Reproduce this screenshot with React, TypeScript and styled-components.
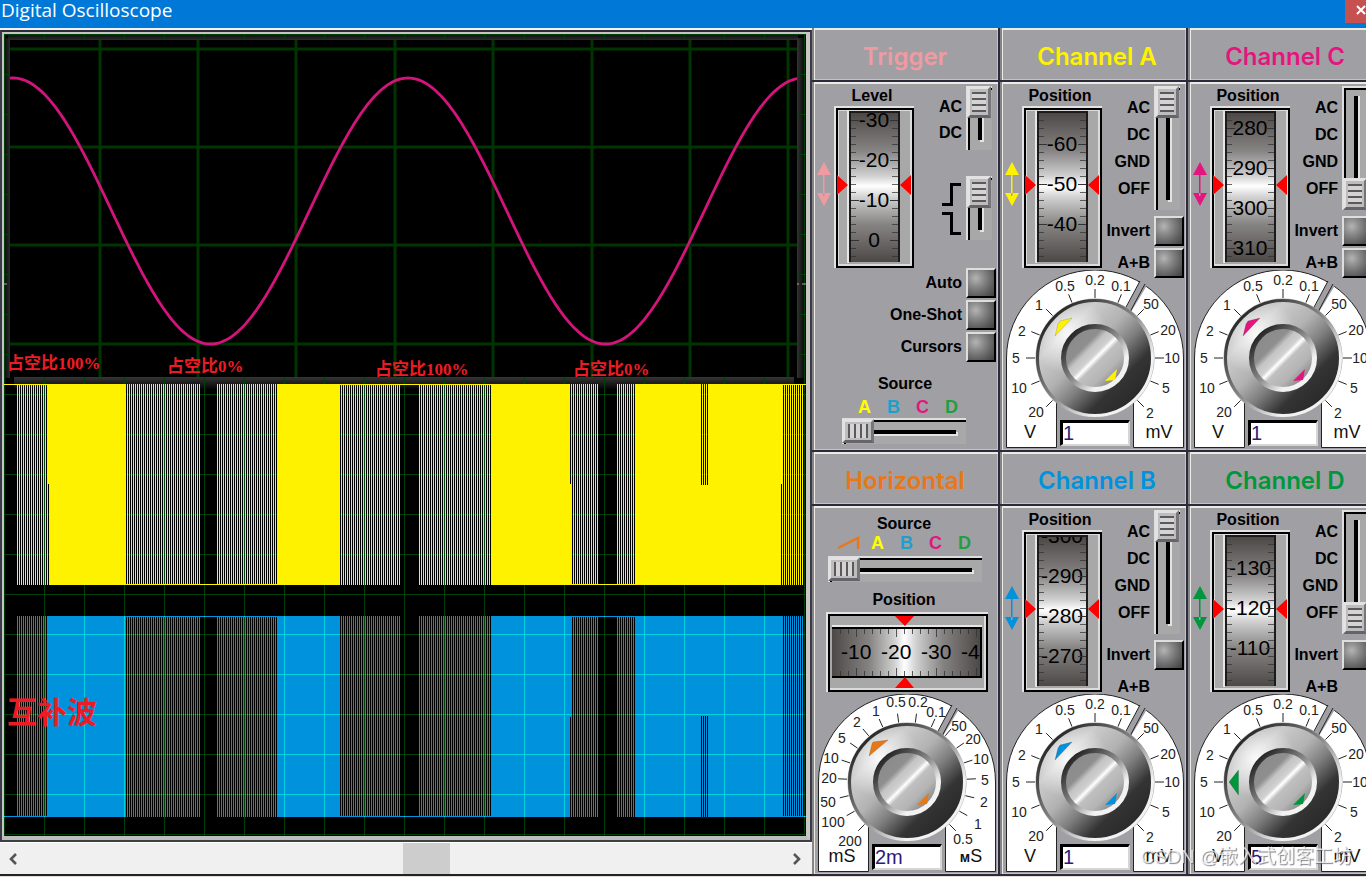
import React from "react";
import styled, { createGlobalStyle, css } from "styled-components";

const C = {
  yellow: "#fff200",
  blue: "#0092dd",
  pink: "#e5157f",
  green: "#00963c",
  orange: "#e87817",
  salmon: "#f09aa2",
  panel: "#a09fa4",
  dark: "#2b2b3b",
};

const Global = createGlobalStyle`
  *, *::before, *::after { box-sizing: border-box; }
  html, body { margin: 0; padding: 0; background: #e9dcd8; }
  body { overflow: hidden; font-family: "Liberation Sans", Arial, "Noto Sans CJK SC", sans-serif; color: #000; }
`;

/* ---------- window ---------- */

const Window = styled.div`
  width: 100%;
  min-width: 1100px;
  overflow: hidden;
`;

const TitleBar = styled.header`
  display: flex;
  justify-content: space-between;
  align-items: flex-start;
  height: 28px;
  background: #0078d7;
`;

const Title = styled.h1`
  margin: 0;
  padding-left: 1px;
  font: 400 19px/20px "Open Sans", "Noto Sans", sans-serif;
  color: #fff;
`;

const CloseButton = styled.button`
  display: flex;
  align-items: center;
  justify-content: flex-end;
  width: 21px;
  height: 23px;
  padding: 0 0 4px;
  border: 0;
  background: #c75050;
`;

const Workspace = styled.main`
  display: flex;
  align-items: stretch;
`;

/* ---------- scope ---------- */

const ScopeColumn = styled.section`
  flex: 1 1 auto;
  min-width: 0;
  display: flex;
  flex-direction: column;
  border-bottom: 2px solid #222;
`;

const Bezel = styled.div`
  border-style: solid;
  border-width: 2px;
  border-color: ${C.dark} #3a3a48 #3f4046 #3a3a48;
  box-shadow: 0 -2px 0 #f2f2f2;
  margin-top: 2px;
`;

const BezelInner = styled.div`
  border-style: solid;
  border-width: 2px 4px 4px 2px;
  border-color: #c4c4c4 #c9c6c4 #bdbdbd #c4c4c4;
`;

const Display = styled.div`
  position: relative;
  height: 802px;
  background: #000;
`;

const DisplaySvg = styled.svg`
  display: block;
  width: 100%;
  height: 100%;
`;

const Note = styled.span<{ $x: number; $y: number; $large?: boolean }>`
  position: absolute;
  left: ${(p) => p.$x}px;
  top: ${(p) => p.$y}px;
  color: #ed1c24;
  white-space: nowrap;
  font: 700 17px/20px "Liberation Serif", "Noto Sans CJK SC", serif;
  ${(p) =>
    p.$large &&
    css`
      font-size: 30px;
      line-height: 36px;
    `}
`;

const ScrollBar = styled.div`
  display: flex;
  align-items: stretch;
  height: 32px;
  padding-right: 3px;
  border-top: 1px solid #fff;
  background: #f0f0f0;
`;

const ScrollArrow = styled.button`
  display: flex;
  align-items: center;
  justify-content: center;
  width: 25px;
  padding: 0;
  border: 0;
  background: transparent;
`;

const ScrollTrack = styled.div`
  flex: 1;
  display: grid;
  grid-template-columns: 378fr 47px 334fr;
`;

const ScrollThumb = styled.div`
  grid-column: 2;
  background: #cdcdcd;
`;

/* ---------- control rack ---------- */

/* the last column runs slightly past the window edge */
const Rack = styled.section`
  flex: none;
  display: grid;
  grid-template-columns: repeat(3, 188px);
  margin-right: -10px;
`;

const Module = styled.section`
  display: flex;
  flex-direction: column;
`;

const face = css`
  border-style: solid;
  border-color: ${C.dark};
  border-width: 0 2px 2px 0;
  background: ${C.panel};
  box-shadow: inset 2px 0 #85848b, inset 3px 2px #ecece4, inset -1px -1px #c4c2c8;
`;

const ModuleTitle = styled.h2<{ $color: string; $indent?: boolean }>`
  ${face}
  height: 54px;
  margin: 0;
  padding: 3px 0 0 ${(p) => (p.$indent ? 8 : 0)}px;
  font-family: Inter, "Liberation Sans", sans-serif;
  font-size: 24px;
  font-weight: 600;
  line-height: 52px;
  text-align: center;
  color: ${(p) => p.$color};
`;

const ModuleBody = styled.div`
  ${face}
  height: 370px;
`;

const Controls = styled.div`
  display: grid;
  grid-template-columns: 22px 80px 84px;
  height: 186px;
  padding-top: 4px;
`;

const ArrowCell = styled.div`
  padding: 76px 0 0 5px;
`;

const WheelCell = styled.div`
  display: flex;
  flex-direction: column;
`;

const Caption = styled.span`
  display: block;
  width: 76px;
  font-size: 16px;
  font-weight: 700;
  line-height: 20px;
  text-align: center;
`;

const Drawing = styled.svg`
  display: block;
`;

const SwitchCell = styled.div`
  display: flex;
  flex-direction: column;
`;

const SwitchRow = styled.div`
  display: flex;
  justify-content: flex-end;
  gap: 4px;
  padding-right: 6px;
`;

const SwitchLabels = styled.div<{ $row: number }>`
  padding-top: 8px;
  font-size: 16px;
  font-weight: 700;
  line-height: ${(p) => p.$row}px;
  text-align: right;
`;

const SwitchLabel = styled.span`
  display: block;
`;

const EdgeRow = styled(SwitchRow)`
  margin-top: 26px;
`;

const EdgeIcon = styled.svg`
  margin-top: 5px;
`;

const PushList = styled.div`
  display: flex;
  flex-direction: column;
  gap: 2px;
  padding-right: 2px;
  margin-top: 6px;
`;

const TriggerPushList = styled(PushList)`
  margin-top: 0;
`;

const PushRow = styled.label`
  display: flex;
  justify-content: flex-end;
  align-items: center;
  gap: 4px;
  height: 30px;
  font-size: 16px;
  font-weight: 700;
  white-space: nowrap;
`;

const PushGap = styled.span`
  width: 30px;
`;

const Push = styled.button`
  width: 30px;
  height: 30px;
  padding: 0;
  border-style: solid;
  border-width: 2px;
  border-color: #dedede #000 #000 #dedede;
  background: radial-gradient(circle at 30% 32%, #b4b4b4 0, #8c8c8c 30%, #5e5c5c 70%, #403e3e 100%);
`;

const grip = css`
  appearance: none;
  -webkit-appearance: none;
  border-style: solid;
  border-width: 3px;
  border-color: #e2e2e2 #77757a #66646a #e2e2e2;
  border-radius: 0;
`;

const Slide = styled.input<{ $vertical?: boolean; $length: number }>`
  appearance: none;
  -webkit-appearance: none;
  display: block;
  flex: none;
  margin: 0;
  box-shadow: inset 2px 2px #dedede, inset 4px 4px #000;
  ${(p) =>
    p.$vertical
      ? css`
          writing-mode: vertical-lr;
          width: 26px;
          height: ${p.$length}px;
          background:
            linear-gradient(#000, #000) 12px 50% / 4px calc(100% - 20px) no-repeat,
            linear-gradient(#e4e4e4, #e4e4e4) 14px 10px / 4px calc(100% - 18px) no-repeat,
            #a8a8a8;
          &::-webkit-slider-thumb {
            ${grip}
            width: 24px;
            height: 32px;
            background:
              repeating-linear-gradient(#5c585c 0 2px, #d4d4d4 2px 6px) 50% 50% / 14px 20px no-repeat,
              #bdbdbd;
          }
        `
      : css`
          width: ${p.$length}px;
          height: 26px;
          background:
            linear-gradient(#000, #000) 50% 12px / calc(100% - 20px) 4px no-repeat,
            linear-gradient(#e4e4e4, #e4e4e4) 10px 14px / calc(100% - 18px) 4px no-repeat,
            #a8a8a8;
          &::-webkit-slider-thumb {
            ${grip}
            width: 32px;
            height: 24px;
            background:
              repeating-linear-gradient(to right, #5c585c 0 2px, #d4d4d4 2px 6px) 50% 50% / 20px 14px no-repeat,
              #bdbdbd;
          }
        `}
`;

const SourceBlock = styled.div`
  padding: 12px 0 0 30px;
`;

const HorizontalBlock = styled.div`
  height: 186px;
  padding: 8px 0 0 14px;
`;

const SourceCaption = styled(Caption)`
  width: 126px;
`;

const WideCaption = styled(Caption)`
  width: 156px;
`;

const Letters = styled.div<{ $count: number }>`
  display: grid;
  grid-template-columns: repeat(${(p) => p.$count}, 29px);
  align-items: center;
  justify-items: center;
  padding-left: 8px;
  font-size: 18px;
  font-weight: 700;
  line-height: 18px;
`;

const Letter = styled.span<{ $color: string }>`
  color: ${(p) => p.$color};
`;

const Inset = styled.div<{ $top: number; $left?: number; $bottom?: number }>`
  padding: ${(p) => p.$top}px 0 ${(p) => p.$bottom || 0}px ${(p) => p.$left || 0}px;
`;

const DialBox = styled.div`
  display: grid;
  width: 178px;
  margin-left: 6px;
  margin-top: 2px;
`;

const DialSvg = styled.svg`
  grid-area: 1 / 1;
  display: block;
`;

const Value = styled.input`
  grid-area: 1 / 1;
  align-self: end;
  width: 70px;
  height: 26px;
  margin: 0 0 2px 54px;
  padding: 0;
  border-style: solid;
  border-width: 3px 2px 2px 3px;
  border-color: #000 #d6d6d6 #d6d6d6 #000;
  border-radius: 0;
  background: #fff;
  font: 400 20px/21px "Liberation Sans", Arial, sans-serif;
  color: #2c1a78;
`;

const Watermark = styled.span`
  position: fixed;
  right: 14px;
  bottom: 8px;
  font: 400 19px/24px "Liberation Sans", "Noto Sans CJK SC", sans-serif;
  color: rgba(255, 255, 255, 0.72);
  text-shadow: 1px 1px 1px rgba(90, 90, 90, 0.75);
  white-space: nowrap;
`;

/* ---------- waveform data ---------- */

type Span = [number, number];

const stripeSpans: Span[] = [[13, 43], [123, 196], [213, 273], [337, 396], [415, 487], [569, 594], [613, 631], [780, 799]];

const stripes = (top: number, bottom: number) =>
  stripeSpans
    .map(([a, b]) => {
      let d = "";
      for (let x = a; x < b; x += 2) d += `M${x} ${top}h1V${bottom}h-1z`;
      return d;
    })
    .join("");

const box = (x: number, y: number, w: number, h: number) => `M${x} ${y}h${w}v${h}h${-w}z`;

const highTrace =
  stripes(350, 551) +
  box(43, 350, 1, 201) + box(44, 350, 1, 100) + box(45, 350, 77, 201) +
  box(273, 350, 63, 201) + box(487, 350, 79, 201) + box(566, 450, 1, 101) + box(567, 350, 1, 201) +
  box(631, 350, 66, 201) + box(697, 451, 7, 100) + box(698, 350, 1, 101) + box(700, 350, 1, 101) +
  box(702, 350, 1, 101) + box(704, 350, 73, 201) + box(777, 350, 1, 100) + box(778, 350, 1, 201) +
  box(0, 350, 43, 1) + box(122, 550, 151, 1) + box(336, 350, 151, 1) + box(568, 550, 63, 1) + box(779, 350, 23, 1);

const lowTrace =
  stripes(582, 783) +
  box(43, 582, 79, 201) + box(273, 582, 63, 201) + box(487, 582, 79, 201) +
  box(566, 582, 1, 101) + box(567, 582, 1, 201) + box(631, 582, 66, 201) + box(697, 582, 7, 100) +
  box(698, 682, 1, 101) + box(700, 682, 1, 101) + box(702, 682, 1, 101) + box(704, 582, 75, 201) +
  box(0, 782, 43, 1) + box(122, 582, 151, 1) + box(336, 782, 151, 1) + box(568, 582, 63, 1) + box(779, 782, 23, 1);

const grid = (() => {
  let d = "";
  for (let k = 0; k <= 20; k++) d += `M${40 * k} 0h1v802h-1zM0 ${40 * k}h802v1h-802z`;
  return d;
})();

const sine = (() => {
  const pts: string[] = [];
  for (let x = 6; x <= 794; x += 2) {
    pts.push(`${x} ${(177 - 133 * Math.cos(((x - 9) / 395) * 2 * Math.PI)).toFixed(1)}`);
  }
  return "M" + pts.join("L");
})();

const Waveforms = () => (
  <DisplaySvg viewBox="0 0 802 802" preserveAspectRatio="none" role="img" aria-label="Waveforms">
    <defs>
      <clipPath id="low"><path d={lowTrace} /></clipPath>
      <clipPath id="inset"><rect x="6" y="6" width="787" height="337" /></clipPath>
      <linearGradient id="gTop" x2="0" y2="1"><stop offset="0" stopColor="#0c0c0c" /><stop offset="1" stopColor="#2c2c2c" /></linearGradient>
      <linearGradient id="gBottom" x2="0" y2="1"><stop offset="0" stopColor="#363636" /><stop offset="1" stopColor="#000" /></linearGradient>
      <linearGradient id="gLeft" x2="1" y2="0"><stop offset="0" stopColor="#080808" /><stop offset="1" stopColor="#2c2c2c" /></linearGradient>
      <linearGradient id="gRight" x2="1" y2="0"><stop offset="0" stopColor="#333" /><stop offset="1" stopColor="#000" /></linearGradient>
    </defs>
    <rect width="802" height="802" fill="#000" />
    <rect x="4" y="0" width="790" height="6" fill="url(#gTop)" />
    <rect x="10" y="343" width="780" height="13" fill="url(#gBottom)" />
    <rect x="0" y="4" width="6" height="340" fill="url(#gLeft)" />
    <rect x="793" y="4" width="9" height="340" fill="url(#gRight)" />
    <g shapeRendering="crispEdges">
      <path d={grid} fill="#003f08" />
      <path d={highTrace} fill={C.yellow} />
      <path d={lowTrace} fill={C.blue} />
      <path d={grid} fill="#00d2e0" clipPath="url(#low)" />
      <rect x="6" y="6" width="787" height="337" fill="#000" />
    </g>
    <g clipPath="url(#inset)">
      <path
        d="M96 0V350M194 0V350M292 0V350M391 0V350M489 0V350M588 0V350M686 0V350M784 0V350M0 15H800M0 113H800M0 211H800M0 310H800"
        stroke="#003400"
        strokeWidth="3"
        fill="none"
      />
      <path d={sine} fill="none" stroke="#d4147c" strokeWidth="2.8" />
    </g>
    <path d="M0 250h3M793 250h2M798 250h4" stroke="#aaa" />
  </DisplaySvg>
);

/* ---------- widgets ---------- */

const UpDown = ({ color }: { color: string }) => (
  <Drawing width="14" height="44" viewBox="0 0 14 44" fill={color}>
    <path d="M7 0L14 13H0zM7 44L14 31H0zM6 10h1.5v24h-1.5z" />
  </Drawing>
);

const drumStops = (
  <>
    <stop offset="0" stopColor="#4c4846" />
    <stop offset=".25" stopColor="#858382" />
    <stop offset=".42" stopColor="#cfcfcf" />
    <stop offset=".49" stopColor="#fff" />
    <stop offset=".57" stopColor="#cfcfcf" />
    <stop offset=".75" stopColor="#858382" />
    <stop offset="1" stopColor="#4c4846" />
  </>
);

const VerticalWheel = ({ id, marks }: { id: string; marks: [string, number][] }) => {
  const ticks: number[] = [];
  for (let y = marks[0][1] - 40; y < 156; y += 8) if (y > 8) ticks.push(y);
  return (
    <Drawing width="80" height="162" viewBox="0 0 80 162">
      <defs>
        <linearGradient id={`${id}-g`} x2="0" y2="1">{drumStops}</linearGradient>
        <clipPath id={`${id}-c`}><rect x="16" y="7" width="49" height="149" /></clipPath>
      </defs>
      <rect width="80" height="162" fill="#e2e2e2" />
      <rect x="2" y="2" width="78" height="160" fill="#000" />
      <rect x="4" y="4" width="74" height="156" fill="#dcdcdc" />
      <rect x="5" y="5" width="71" height="153" fill="#a8a8a8" />
      <rect x="13" y="5" width="2" height="152" fill="#e6e6e6" />
      <rect x="15" y="5" width="51" height="151" fill="#1c1a1a" />
      <rect x="17" y="7" width="47" height="149" fill={`url(#${id}-g)`} />
      <path
        d={ticks.map((y) => `M17 ${y}.5h5M58 ${y}.5h6`).join("")}
        stroke="#333"
        strokeOpacity=".75"
        fill="none"
      />
      <g clipPath={`url(#${id}-c)`} fontSize="21" textAnchor="middle" fill="#000">
        {marks.map(([t, y]) => (
          <text key={t} x="40" y={y + 7}>{t}</text>
        ))}
        <path d={marks.map(([, y]) => `M17 ${y}.5h8M56 ${y}.5h8`).join("")} stroke="#333" />
      </g>
      <path d="M3 69L14 79L3 89zM77 69L66 79L77 89z" fill="#f00" />
    </Drawing>
  );
};

const HorizontalWheel = () => {
  const ticks: number[] = [];
  for (let x = 14; x < 156; x += 8) ticks.push(x);
  const major = (x: number) => (x - 30) % 40 === 0;
  return (
    <Drawing width="162" height="80" viewBox="0 0 162 80">
      <defs>
        <linearGradient id="hw-g" x2="1" y2="0">{drumStops}</linearGradient>
        <clipPath id="hw-c"><rect x="6" y="14" width="148" height="50" /></clipPath>
      </defs>
      <rect width="162" height="80" fill="#e2e2e2" />
      <rect x="2" y="2" width="160" height="78" fill="#000" />
      <rect x="4" y="4" width="156" height="74" fill="#dcdcdc" />
      <rect x="4" y="4" width="154" height="72" fill="#a8a8a8" />
      <rect x="6" y="13" width="150" height="2" fill="#e6e6e6" />
      <rect x="6" y="15" width="150" height="51" fill="#000" />
      <rect x="6" y="17" width="148" height="47" fill="url(#hw-g)" />
      <path
        d={ticks.map((x) => `M${x}.5 17v${major(x) ? 8 : 5}M${x}.5 64v${major(x) ? -8 : -5}`).join("")}
        stroke="#333"
        strokeOpacity=".8"
        fill="none"
      />
      <g clipPath="url(#hw-c)" fontSize="21" fill="#000">
        <text x="15" y="47">-10</text>
        <text x="55" y="47">-20</text>
        <text x="95" y="47">-30</text>
        <text x="135" y="47">-4</text>
      </g>
      <path d="M69 4h19L79 14zM69 76h19L79 65z" fill="#f00" />
    </Drawing>
  );
};

type Mark = [string, number, number];

const voltMarks: Mark[] = [
  ["20", 30, 142], ["10", 13, 118], ["5", 10, 88], ["2", 16, 61], ["1", 33, 35], ["0.5", 59, 16], ["0.2", 89, 10],
  ["0.1", 115, 16], ["50", 145, 34], ["20", 162, 60], ["10", 166, 88], ["5", 160, 118], ["2", 144, 143],
];

const timeMarks: Mark[] = [
  ["200", 32, 147], ["100", 15, 128], ["50", 10, 108], ["20", 11, 84], ["10", 13, 64], ["5", 24, 44], ["2", 39, 28],
  ["1", 58, 17], ["0.5", 78, 8], ["0.2", 100, 8], ["0.1", 118, 18], ["50", 141, 32], ["20", 155, 45], ["10", 163, 65],
  ["5", 167, 86], ["2", 166, 108], ["1", 160, 130], ["0.5", 145, 145],
];

/* pointer shapes for the knob positions in use */
const pointers = {
  one: "M54 51L66 48L49 66L52 54z",
  twoMilli: "M55 48L70 46L51 62L54 50z",
  five: "M35 88L44.5 76V101z",
};

interface DialProps {
  id: string;
  color: string;
  marks: Mark[];
  left: string;
  right: React.ReactNode;
  value: string;
  label: string;
  pointer: keyof typeof pointers;
}

const Dial = ({ id, color, marks, left, right, value, label, pointer }: DialProps) => {
  const step = 270 / (marks.length - 1);
  const ticks = marks
    .map((_, i) => {
      const a = ((225 - i * step) * Math.PI) / 180;
      const p = (r: number) => `${(89 + r * Math.cos(a)).toFixed(1)} ${(88 - r * Math.sin(a)).toFixed(1)}`;
      return `M${p(60)}L${p(69)}`;
    })
    .join("");
  return (
    <DialBox>
      <DialSvg width="178" height="178" viewBox="0 0 178 178">
        <defs>
          <linearGradient id={`${id}-body`} x1=".1" y1=".1" x2=".9" y2=".9">
            <stop offset="0" stopColor="#a8a8a8" />
            <stop offset=".2" stopColor="#cccccc" />
            <stop offset=".42" stopColor="#b2b2b2" />
            <stop offset=".58" stopColor="#808080" />
            <stop offset=".76" stopColor="#343434" />
            <stop offset="1" stopColor="#262626" />
          </linearGradient>
          <radialGradient id={`${id}-shine`} cx=".27" cy=".3" r=".34">
            <stop offset="0" stopColor="#fff" stopOpacity=".9" />
            <stop offset="1" stopColor="#fff" stopOpacity="0" />
          </radialGradient>
          <linearGradient id={`${id}-rim`} x1=".1" y1=".1" x2=".9" y2=".9">
            <stop offset=".05" stopColor="#2a2a2a" />
            <stop offset=".5" stopColor="#8e8e8e" />
            <stop offset=".8" stopColor="#f2f2f2" />
          </linearGradient>
          <linearGradient id={`${id}-cap`} x1=".1" y1=".1" x2=".9" y2=".9">
            <stop offset=".05" stopColor="#8a8a8a" />
            <stop offset=".28" stopColor="#8f8f8f" />
            <stop offset=".36" stopColor="#c4c4c4" />
            <stop offset=".46" stopColor="#d0d0d0" />
            <stop offset=".51" stopColor="#fff" />
            <stop offset=".57" stopColor="#c0c0c0" />
            <stop offset=".75" stopColor="#b4b4b4" />
            <stop offset=".92" stopColor="#8a8a8a" />
          </linearGradient>
        </defs>
        <path
          d="M.5 177.5V88A88.5 88 0 0 1 177.5 88V177.5H127.5V120H50.5V177.5z"
          fill="#fff"
          stroke="#222"
        />
        <path d="M137 5L119 40L125 42L143 12z" fill={C.panel} />
        <path d="M134 11L119 39M139 14L124 42" stroke="#222" fill="none" />
        <path d={ticks} stroke="#222" fill="none" />
        <circle cx="89" cy="88" r="59.5" fill="#a6a6a6" />
        <circle cx="89" cy="88" r="57.5" fill={`url(#${id}-body)`} />
        <circle cx="89" cy="88" r="57.5" fill={`url(#${id}-shine)`} stroke={`url(#${id}-rim)`} strokeWidth="3" />
        <circle cx="89" cy="88" r="31.5" fill={`url(#${id}-cap)`} stroke={`url(#${id}-rim)`} strokeWidth="5" />
        <path d={pointers[pointer]} fill={color} stroke="#000" strokeOpacity=".25" strokeWidth=".6" />
        <path d="M111 99L99 111L109 110z" fill={color} />
        <g fontSize="14" textAnchor="middle" fill="#222">
          {marks.map(([t, x, y]) => (
            <text key={`${t}-${x}`} x={x} y={y + 5}>{t}</text>
          ))}
        </g>
        <g fontSize="18" textAnchor="middle" fill="#111">
          <text x="24" y="168">{left}</text>
          <text x="153" y="168">{right}</text>
        </g>
      </DialSvg>
      <Value defaultValue={value} aria-label={label} />
    </DialBox>
  );
};

const VerticalSlide = ({ length, value, label }: { length: number; value: number; label: string }) => (
  <Slide type="range" min={0} max={3} defaultValue={value} $vertical $length={length} aria-label={label} />
);

interface ChannelProps {
  name: string;
  color: string;
  marks: [string, number][];
  coupling: number;
  value: string;
  sum?: boolean;
  pointer?: keyof typeof pointers;
}

const Channel = ({ name, color, marks, coupling, value, sum, pointer = "one" }: ChannelProps) => (
  <Module>
    <ModuleTitle $color={color} $indent>Channel {name}</ModuleTitle>
    <ModuleBody>
      <Controls>
        <ArrowCell><UpDown color={color} /></ArrowCell>
        <WheelCell>
          <Caption>Position</Caption>
          <VerticalWheel id={`w${name}`} marks={marks} />
        </WheelCell>
        <SwitchCell>
          <SwitchRow>
            <SwitchLabels $row={27}>
              {["AC", "DC", "GND", "OFF"].map((t) => <SwitchLabel key={t}>{t}</SwitchLabel>)}
            </SwitchLabels>
            <VerticalSlide length={124} value={coupling} label={`Channel ${name} coupling`} />
          </SwitchRow>
          <PushList>
            <PushRow>Invert<Push type="button" /></PushRow>
            <PushRow>A+B{sum ? <Push type="button" /> : <PushGap />}</PushRow>
          </PushList>
        </SwitchCell>
      </Controls>
      <Dial
        id={`d${name}`} color={color} marks={voltMarks} left="V" right="mV"
        value={value} label={`Channel ${name} volts`} pointer={pointer}
      />
    </ModuleBody>
  </Module>
);

const sources: [string, string][] = [["A", "#ffff00"], ["B", "#1e9fcc"], ["C", C.pink], ["D", "#1fa040"]];

const Trigger = () => (
  <Module>
    <ModuleTitle $color={C.salmon}>Trigger</ModuleTitle>
    <ModuleBody>
      <Controls>
        <ArrowCell><UpDown color={C.salmon} /></ArrowCell>
        <WheelCell>
          <Caption>Level</Caption>
          <VerticalWheel id="wT" marks={[["-30", 14], ["-20", 54], ["-10", 94], ["0", 134]]} />
        </WheelCell>
        <SwitchCell>
          <SwitchRow>
            <SwitchLabels $row={26}>
              <SwitchLabel>AC</SwitchLabel>
              <SwitchLabel>DC</SwitchLabel>
            </SwitchLabels>
            <VerticalSlide length={64} value={0} label="Trigger coupling" />
          </SwitchRow>
          <EdgeRow>
            <EdgeIcon width="20" height="56" viewBox="0 0 20 56" fill="none" stroke="#000" strokeWidth="3">
              <path d="M0 23.5H9.5V3.5H19M0 32.5H9.5V52.5H19" />
            </EdgeIcon>
            <VerticalSlide length={64} value={0} label="Trigger edge" />
          </EdgeRow>
        </SwitchCell>
      </Controls>
      <TriggerPushList>
        {["Auto", "One-Shot", "Cursors"].map((t) => (
          <PushRow key={t}>{t}<Push type="button" /></PushRow>
        ))}
      </TriggerPushList>
      <SourceBlock>
        <SourceCaption>Source</SourceCaption>
        <Inset $top={4}>
          <Letters $count={4}>
            {sources.map(([t, c]) => <Letter key={t} $color={c}>{t}</Letter>)}
          </Letters>
        </Inset>
        <Inset $top={2}>
          <Slide type="range" min={0} max={3} defaultValue={0} $length={124} aria-label="Trigger source" />
        </Inset>
      </SourceBlock>
    </ModuleBody>
  </Module>
);

const Horizontal = () => (
  <Module>
    <ModuleTitle $color={C.orange}>Horizontal</ModuleTitle>
    <ModuleBody>
      <HorizontalBlock>
        <WideCaption>Source</WideCaption>
        <Letters $count={5}>
          <Drawing width="24" height="14" viewBox="0 0 24 14" fill="none" stroke={C.orange} strokeWidth="2.4">
            <path d="M1 12L21 2V13" />
          </Drawing>
          {sources.map(([t, c]) => <Letter key={t} $color={c}>{t}</Letter>)}
        </Letters>
        <Inset $top={4} $left={2} $bottom={8}>
          <Slide type="range" min={0} max={4} defaultValue={0} $length={154} aria-label="Horizontal source" />
        </Inset>
        <WideCaption>Position</WideCaption>
        <Inset $top={2}><HorizontalWheel /></Inset>
      </HorizontalBlock>
      <Dial
        id="dH" color={C.orange} marks={timeMarks} left="mS"
        right={<><tspan fontSize="14" fontWeight="700">м</tspan>S</>}
        value="2m" label="Time base" pointer="twoMilli"
      />
    </ModuleBody>
  </Module>
);

export default function App() {
  return (
    <Window>
      <Global />
      <TitleBar>
        <Title>Digital Oscilloscope</Title>
        <CloseButton type="button" aria-label="Close">
          <svg width="10" height="10" viewBox="0 0 10 10" stroke="#fff" strokeWidth="2">
            <path d="M1 1L9 9M9 1L1 9" />
          </svg>
        </CloseButton>
      </TitleBar>
      <Workspace>
        <ScopeColumn>
          <Bezel>
            <BezelInner>
              <Display>
                <Waveforms />
                <Note $x={3} $y={320}>占空比100%</Note>
                <Note $x={163} $y={323}>占空比0%</Note>
                <Note $x={371} $y={326}>占空比100%</Note>
                <Note $x={569} $y={326}>占空比0%</Note>
                <Note $x={3} $y={661} $large>互补波</Note>
              </Display>
            </BezelInner>
          </Bezel>
          <ScrollBar>
            <ScrollArrow type="button" aria-label="Scroll left">
              <svg width="10" height="12" viewBox="0 0 10 12" fill="none" stroke="#555" strokeWidth="2.6">
                <path d="M8 1L3 6L8 11" />
              </svg>
            </ScrollArrow>
            <ScrollTrack><ScrollThumb /></ScrollTrack>
            <ScrollArrow type="button" aria-label="Scroll right">
              <svg width="10" height="12" viewBox="0 0 10 12" fill="none" stroke="#555" strokeWidth="2.6">
                <path d="M2 1L7 6L2 11" />
              </svg>
            </ScrollArrow>
          </ScrollBar>
        </ScopeColumn>
        <Rack>
          <Trigger />
          <Channel name="A" color={C.yellow} coupling={0} value="1" sum marks={[["-60", 38], ["-50", 78], ["-40", 118]]} />
          <Channel name="C" color={C.pink} coupling={3} value="1" sum marks={[["280", 22], ["290", 62], ["300", 102], ["310", 142]]} />
          <Horizontal />
          <Channel name="B" color={C.blue} coupling={0} value="1" marks={[["-300", 6], ["-290", 46], ["-280", 86], ["-270", 126]]} />
          <Channel name="D" color={C.green} coupling={3} value="5" pointer="five" marks={[["-130", 38], ["-120", 78], ["-110", 118]]} />
        </Rack>
      </Workspace>
      <Watermark>CSDN @嵌入式创客工坊</Watermark>
    </Window>
  );
}
